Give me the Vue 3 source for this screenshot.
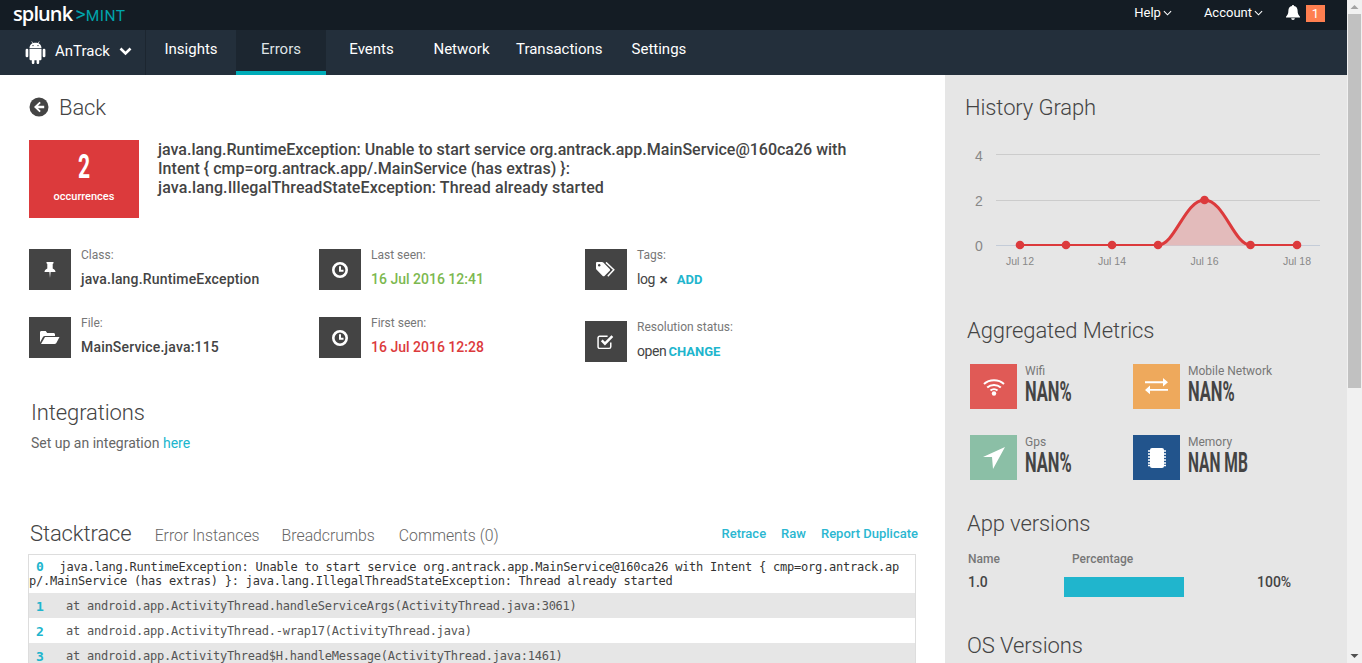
<script setup>
const meta = [
  [
    { icon: 'pin', label: 'Class:', value: 'java.lang.RuntimeException' },
    { icon: 'folder', label: 'File:', value: 'MainService.java:115' }
  ],
  [
    { icon: 'clock', label: 'Last seen:', value: '16 Jul 2016 12:41', cls: 'green' },
    { icon: 'clock', label: 'First seen:', value: '16 Jul 2016 12:28', cls: 'red' }
  ]
]
const frames = [
  'at android.app.ActivityThread.handleServiceArgs(ActivityThread.java:3061)',
  'at android.app.ActivityThread.-wrap17(ActivityThread.java)',
  'at android.app.ActivityThread$H.handleMessage(ActivityThread.java:1461)'
]
const pts = [1020, 1066, 1112, 1158, 1204.5, 1250.5, 1297]
</script>

<template>
  <div class="page">
    <div class="content">
      <header class="topbar">
        <div class="brand"><span class="splunk">splunk</span><span class="gt">&gt;</span><span class="mint">MINT</span></div>
        <div class="topright">
          <span class="tlink">Help <svg width="9" height="6" viewBox="0 0 10 6"><path d="M1 1l4 4 4-4" fill="none" stroke="#fff" stroke-width="1.2"/></svg></span>
          <span class="tlink acc">Account <svg width="9" height="6" viewBox="0 0 10 6"><path d="M1 1l4 4 4-4" fill="none" stroke="#fff" stroke-width="1.2"/></svg></span>
          <svg class="bell" width="14" height="15" viewBox="0 0 14 15"><path d="M7 0c.6 0 1 .4 1 1 2.4.4 3.6 2.300 3.600 4.500 0 3.500 1 4.700 2.400 6.200v.8H0v-.8c1.400-1.500 2.400-2.700 2.400-6.200C2.400 3.300 3.600 1.400 6 1c0-.6.400-1 1-1zM5.200 13.300h3.600C8.800 14.300 8 15 7 15s-1.800-.7-1.800-1.700z" fill="#fff"/></svg>
          <span class="badge">1</span>
        </div>
      </header>
      <nav class="navbar">
        <div class="app">
          <svg width="21" height="23" viewBox="0 0 21 23"><g fill="#fff"><path d="M4.500 7.800h12v10.200c0 .8-.6 1.300-1.300 1.300h-1v2.400c0 .7-.6 1.300-1.300 1.300s-1.300-.6-1.300-1.300v-2.400H9.400v2.400c0 .7-.6 1.300-1.300 1.300s-1.300-.6-1.300-1.300v-2.400h-1c-.7 0-1.300-.5-1.300-1.300z"/><rect x="0.600" y="7.800" width="2.700" height="8.500" rx="1.300"/><rect x="17.700" y="7.800" width="2.700" height="8.500" rx="1.300"/><path d="M4.500 7c.1-2.200 1.300-3.800 3-4.700L6.400.6l.5-.3 1.100 1.800c1.600-.6 3.400-.6 5 0L14.100.3l.5.3-1.100 1.700c1.700.9 2.900 2.500 3 4.700z"/></g><circle cx="8" cy="4.600" r=".7" fill="#232f3b"/><circle cx="13" cy="4.600" r=".7" fill="#232f3b"/></svg>
          <span class="appname">AnTrack</span>
          <svg class="appchev" width="13" height="9" viewBox="0 0 13 9"><path d="M1.500 1.500l5 5 5-5" fill="none" stroke="#fff" stroke-width="2.600"/></svg>
        </div>
        <a class="tab t1">Insights</a>
        <a class="tab active">Errors</a>
        <a class="tab t3">Events</a>
        <a class="tab t4">Network</a>
        <a class="tab t5">Transactions</a>
        <a class="tab t6">Settings</a>
      </nav>
      <div class="columns">
        <main class="main">
          <div class="back">
            <svg width="20" height="20" viewBox="0 0 20 20"><circle cx="10" cy="10" r="9.500" fill="#444"/><path d="M10.500 4.800l1.300 1.300-2.800 2.700h6.200v2.400H9l2.800 2.700-1.300 1.300L5 10z" fill="#fff"/></svg>
            <span>Back</span>
          </div>
          <div class="summary">
            <div class="occ"><div class="num">2</div><div class="occl">occurrences</div></div>
            <div class="title">java.lang.RuntimeException: Unable to start service org.antrack.app.MainService@160ca26 with<br><span class="l2">Intent { cmp=org.antrack.app/.MainService (has extras) }:</span><br><span class="l3">java.lang.IllegalThreadStateException: Thread already started</span></div>
          </div>
          <div class="meta">
            <div v-for="(col, ci) in meta" :key="ci" class="mcol" :class="'c' + ci">
              <div v-for="m in col" :key="m.label" class="mitem">
                <div class="mbox">
                  <svg v-if="m.icon === 'pin'" width="12" height="16" viewBox="0 0 12 16"><path d="M2.500 0h7v1.300L8.700 2v4.500c1.800.8 2.800 2.100 2.800 3.500H6.600L6 16l-.6-6H.5c0-1.400 1-2.700 2.800-3.500V2l-.8-.7z" fill="#fff"/></svg>
                  <svg v-if="m.icon === 'folder'" width="20" height="15" viewBox="0 0 20 15"><path d="M0 2.500C0 1.500.6 1 1.500 1h4.200l1.500 2h6.300c.9 0 1.500.6 1.500 1.500V6H5c-1 0-1.700.4-2.200 1.200L0 12.500z" fill="#fff"/><path d="M5 7h14.500l-3.300 6.200c-.4.6-1 .8-1.700.8H1z" fill="#fff"/></svg>
                  <svg v-if="m.icon === 'clock'" width="16" height="16" viewBox="0 0 16 16"><circle cx="8" cy="8" r="6.700" fill="none" stroke="#fff" stroke-width="2.600"/><path d="M8 4.300v4.400h3.500" fill="none" stroke="#fff" stroke-width="2"/></svg>
                </div>
                <div class="mtext"><div class="mlabel">{{ m.label }}</div><div class="mval" :class="m.cls">{{ m.value }}</div></div>
              </div>
            </div>
            <div class="mcol c2">
              <div class="mitem">
                <div class="mbox"><svg width="20" height="16" viewBox="0 0 20 16"><path d="M0 1.200C0 .5.500 0 1.200 0H6c.5 0 1 .2 1.300.5l6.400 6.400c.5.500.5 1.300 0 1.800l-5.200 5.200c-.5.5-1.300.5-1.800 0L.4 7.500C.1 7.200 0 6.800 0 6.300z" fill="#fff"/><circle cx="3.200" cy="3.200" r="1.200" fill="#444"/><path d="M10 .4l7.800 7.400-6 6.500" fill="none" stroke="#fff" stroke-width="1.500"/></svg></div>
                <div class="mtext"><div class="mlabel">Tags:</div><div class="mval plain">log <span class="x">✕</span><a class="add">ADD</a></div></div>
              </div>
              <div class="mitem res">
                <div class="mbox"><svg width="18" height="17" viewBox="0 0 17 16"><path d="M13 9v4a1.500 1.500 0 0 1-1.500 1.500H2.500A1.500 1.500 0 0 1 1 13V4.500A1.500 1.500 0 0 1 2.500 3H10" fill="none" stroke="#fff" stroke-width="1.400"/><path d="M4.500 7l3 3 7-7" fill="none" stroke="#fff" stroke-width="2.400"/></svg></div>
                <div class="mtext"><div class="mlabel">Resolution status:</div><div class="mval plain">open <a class="chg">CHANGE</a></div></div>
              </div>
            </div>
          </div>
          <h2 class="integ">Integrations</h2>
          <p class="integp">Set up an integration <a>here</a></p>
          <div class="tabs">
            <h2>Stacktrace</h2>
            <span class="st s1">Error Instances</span>
            <span class="st s2">Breadcrumbs</span>
            <span class="st s3">Comments (0)</span>
            <div class="links"><a>Retrace</a><a>Raw</a><a>Report Duplicate</a></div>
          </div>
          <div class="trace">
            <div class="row0"><b>0</b>java.lang.RuntimeException: Unable to start service org.antrack.app.MainService@160ca26 with Intent { cmp=org.antrack.app/.MainService (has extras) }: java.lang.IllegalThreadStateException: Thread already started</div>
            <div v-for="(f, i) in frames" :key="i" class="frow" :class="{ odd: i % 2 === 0 }"><b>{{ i + 1 }}</b><span>{{ f }}</span></div>
          </div>
        </main>
        <aside class="side">
          <h2 class="hg">History Graph</h2>
          <svg class="chart" width="402" height="160" viewBox="945 130 402 160">
            <g stroke="#ccc" stroke-width="1"><line x1="996" x2="1320" y1="154.500" y2="154.500"/><line x1="996" x2="1320" y1="200.500" y2="200.500"/><line x1="996" x2="1320" y1="245.500" y2="245.500" stroke="#c4ccd8"/></g>
            <g class="ya"><text x="975" y="161">4</text><text x="975" y="206">2</text><text x="975" y="251">0</text></g>
            <path d="M1158 245.500C1175 245.500 1185 200 1204.500 200C1224 200 1234 245.500 1250.500 245.500Z" fill="#e3bbbb"/>
            <path d="M1158 245C1175 245 1185 200 1204.500 200C1224 200 1234 245 1250.500 245" fill="none" stroke="#dc3a3c" stroke-width="3"/>
            <path d="M1020 245H1158M1250.500 245H1297" fill="none" stroke="#dc3a3c" stroke-width="2"/>
            <circle v-for="(x, i) in pts" :key="i" :cx="x" :cy="i === 4 ? 200 : 245" r="4.300" fill="#dc3a3c"/>
            <g class="xa"><text x="1020" y="265">Jul 12</text><text x="1112" y="265">Jul 14</text><text x="1204.500" y="265">Jul 16</text><text x="1297" y="265">Jul 18</text></g>
          </svg>
          <h2 class="am">Aggregated Metrics</h2>
          <div class="metrics">
            <div class="metric">
              <div class="mi redbg"><svg width="22" height="18" viewBox="0 0 22 18"><g fill="none" stroke="#fff" stroke-width="2"><path d="M1 6c5.500-5 14.500-5 20 0"/><path d="M4.200 9.500c3.800-3.500 9.800-3.500 13.600 0"/><path d="M7.500 12.500c2-1.800 5-1.800 7 0"/></g><circle cx="11" cy="15.500" r="2.200" fill="#fff"/></svg></div>
              <div><div class="ml">Wifi</div><div class="mv">NAN%</div></div>
            </div>
            <div class="metric">
              <div class="mi orange"><svg width="23" height="17" viewBox="0 0 23 17"><path d="M0 3.500h18V0l5 4.500-5 4.500V5.500H0zM23 11.500H5V8l-5 4.500L5 17v-3.500h18z" fill="#fff" transform="scale(1 .95)"/></svg></div>
              <div><div class="ml">Mobile Network</div><div class="mv">NAN%</div></div>
            </div>
            <div class="metric">
              <div class="mi teal"><svg width="22" height="22" viewBox="0 0 22 22"><path d="M22 0L10 22l-1-12L0 10z" fill="#fff"/></svg></div>
              <div><div class="ml">Gps</div><div class="mv">NAN%</div></div>
            </div>
            <div class="metric">
              <div class="mi blue"><svg width="18" height="20" viewBox="0 0 18 20"><rect x="2" y="0" width="14" height="20" rx="2" fill="#fff"/><g stroke="#fff" stroke-width="1.300"><path d="M0 3h18M0 6h18M0 9h18M0 12h18M0 15h18M0 17.500h18"/></g></svg></div>
              <div><div class="ml">Memory</div><div class="mv mb">NAN MB</div></div>
            </div>
          </div>
          <h2 class="av">App versions</h2>
          <div class="vhead"><span>Name</span><span>Percentage</span></div>
          <div class="vrow"><span class="vn">1.0</span><div class="bar"></div><span class="vp">100%</span></div>
          <h2 class="os">OS Versions</h2>
        </aside>
      </div>
    </div>
    <div class="scroll">
      <svg width="15" height="14" viewBox="0 0 15 14"><path d="M3.500 9L7.500 5l4 4z" fill="#a3a3a3"/></svg>
      <div class="thumb"></div>
      <div class="spacer"></div>
      <svg width="15" height="14" viewBox="0 0 15 14"><path d="M3.500 5l4 4 4-4z" fill="#505050"/></svg>
    </div>
  </div>
</template>

<style>
html, body { margin: 0; height: 100%; overflow: hidden; }
</style>

<style scoped>
.page { display: flex; height: 663px; width: 1362px; overflow: hidden; font-family: Roboto, sans-serif; color: #444; background: #fff; }
.content { width: 1347px; display: flex; flex-direction: column; overflow: hidden; }
.topbar { height: 30px; flex: none; background: #141c24; display: flex; justify-content: space-between; color: #fff; }
.brand { margin-left: 13px; display: flex; align-items: baseline; line-height: 28px; }
.splunk { font: 600 20px/28px "Open Sans", sans-serif; letter-spacing: -0.9px; color: #fff; }
.gt { font: 400 20px/28px Roboto, sans-serif; color: #00a4ac; margin-left: 3px; }
.mint { font: 400 15.500px/28px Roboto, sans-serif; letter-spacing: .5px; color: #00a4ac; margin-left: 0; }
.topright { display: flex; align-items: center; font-size: 13px; padding-right: 22px; height: 27px; }
.tlink { display: inline-flex; align-items: center; gap: 2px; margin-top: -2px; }
.acc { margin-left: 32px; }
.bell { margin-left: 23px; margin-top: -2px; }
.badge { margin-left: 6px; width: 19px; height: 17px; background: #ff7f50; font-size: 13px; line-height: 17px; text-align: center; }
.navbar { height: 45px; flex: none; background: #232f3b; display: flex; color: #fff; font-size: 15px; }
.app { width: 146px; border-right: 1px solid #1c2630; display: flex; align-items: center; padding-left: 25px; box-sizing: border-box; flex: none; }
.appname { margin-left: 9px; margin-right: 9px; font-size: 15px; margin-top: -4px; }
.appchev { margin-top: -3px; }
.tab { line-height: 38px; flex: none; text-align: center; box-sizing: border-box; height: 45px; }
.t1 { width: 90px; }
.active { width: 90px; background: #1c2630; border-bottom: 4px solid #00acb8; color: #dfe3e6; }
.t3 { width: 91px; }
.t4 { width: 89px; }
.t5 { margin-left: 10px; }
.t6 { margin-left: 29px; }
.columns { flex: 1; display: flex; min-height: 0; }
.main { width: 945px; flex: none; box-sizing: border-box; padding: 0 30px 0 29px; overflow: hidden; }
.back { display: flex; align-items: center; height: 26px; margin-top: 19px; font-weight: 300; font-size: 22px; gap: 10px; color: #444; letter-spacing: -.1px; }
.summary { display: flex; margin-top: 20px; }
.occ { width: 110px; height: 78px; background: #dc3a3c; color: #fff; text-align: center; flex: none; }
.num { font: 700 34px/40px Roboto, sans-serif; margin-top: 6px; transform: scaleX(.62); }
.occl { font-size: 11px; font-weight: 500; margin-top: 4px; line-height: 14px; }
.title { margin-left: 19px; font-size: 16px; font-weight: 500; line-height: 19px; white-space: nowrap; color: #444; }
.l2 { letter-spacing: .04px; }
.l3 { letter-spacing: .11px; }
.meta { display: flex; margin-top: 31px; }
.mcol { display: flex; flex-direction: column; gap: 27px; }
.c0 { width: 290px; }
.c1 { width: 266px; }
.mitem { display: flex; height: 41px; }
.res { margin-top: 4px; }
.mbox { width: 42px; height: 41px; background: #444; display: flex; align-items: center; justify-content: center; flex: none; }
.mtext { margin-left: 10px; margin-top: -1px; }
.mlabel { font-size: 12px; color: #777; line-height: 14px; }
.mval { font-size: 14px; font-weight: 500; line-height: 16px; margin-top: 9px; white-space: nowrap; letter-spacing: .18px; }
.green { color: #7cb84f; letter-spacing: 0; }
.red { color: #dc3a3c; letter-spacing: 0; }
.plain { font-weight: 400; font-size: 14px; letter-spacing: -.4px; }
.x { font-size: 11px; font-weight: 700; margin-left: 1px; }
.add { color: #20b5cd; font-weight: 700; font-size: 13px; margin-left: 9px; letter-spacing: 0; }
.chg { color: #20b5cd; font-weight: 700; font-size: 13px; letter-spacing: 0; margin-left: -1px; }
.integ { font-size: 22px; font-weight: 300; margin: 38px 0 0 2px; line-height: 26px; color: #444; letter-spacing: -.1px; }
.integp { margin: 7px 0 0 2px; font-size: 14px; line-height: 20px; color: #666; font-weight: 400; }
.integp a { color: #20b5cd; }
h2 { font-weight: 300; font-size: 22px; margin: 0; }
.tabs { display: flex; align-items: baseline; margin-top: 68px; height: 33px; margin-left: 1px; margin-right: -3px; }
.tabs h2 { line-height: 26px; color: #444; letter-spacing: -.1px; }
.st { font-size: 15.800px; font-weight: 300; color: #666; }
.s1 { margin-left: 23px; }
.s2 { margin-left: 22px; }
.s3 { margin-left: 24px; }
.links { margin-left: auto; display: flex; gap: 15px; font-size: 13px; font-weight: 500; color: #2bb7d1; align-self: flex-start; line-height: 26px; }
.trace { width: 888px; box-sizing: border-box; border: 1px solid #ddd; margin-left: -1px; font: 12px/14px "DejaVu Sans Mono", monospace; color: #555; letter-spacing: -.23px; }
.row0 { word-break: break-all; padding: 5px 10px 4px 0; color: #333; height: 29px; }
.row0 b { color: #20b5cd; margin-left: 7px; margin-right: 16px; font-size: 13px; }
.frow { height: 25px; line-height: 27px; display: flex; white-space: nowrap; }
.frow b { color: #20b5cd; margin-left: 7px; width: 30px; flex: none; font-size: 13px; }
.odd { background: #e6e6e6; }
.side { width: 402px; flex: none; background: #e6e6e6; overflow: hidden; position: relative; }
.side h2 { color: #444; line-height: 26px; letter-spacing: -.1px; }
.hg { margin: 20px 0 0 20px; }
.chart { display: block; margin-top: 9px; }
.ya text { font: 14px "Liberation Sans", sans-serif; fill: #888; }
.xa text { font: 10.500px "Liberation Sans", sans-serif; fill: #888; text-anchor: middle; }
.am { margin: 28px 0 0 22px; }
.metrics { display: grid; grid-template-columns: 163px 1fr; row-gap: 26px; margin: 20px 0 0 25px; }
.metric { display: flex; height: 45px; gap: 8px; }
.mi { width: 47px; height: 45px; display: flex; align-items: center; justify-content: center; flex: none; }
.redbg { background: #e05a56; }
.orange { background: #eea95c; }
.teal { background: #8bbfa6; }
.blue { background: #22548c; }
.ml { font-size: 12px; color: #777; line-height: 14px; font-weight: 400; }
.mv { font: 700 27px/26px Roboto, sans-serif; color: #444; transform: scaleX(.61); transform-origin: left; white-space: nowrap; margin-top: 1px; }
.mb { transform: scaleX(.575); }
.av { margin: 31px 0 0 22px; }
.vhead { margin: 15px 0 0 23px; display: flex; font-size: 12px; font-weight: 500; color: #777; line-height: 14px; }
.vhead span:first-child { width: 104px; }
.vrow { display: flex; align-items: center; margin: 11px 0 0 23px; height: 20px; font-size: 14px; font-weight: 500; }
.vn { width: 96px; margin-top: -10px; }
.bar { width: 120px; height: 20px; background: #20b5cd; }
.vp { margin-left: 73px; margin-top: -10px; }
.os { margin: 36px 0 0 22px; }
.scroll { width: 15px; flex: none; background: #f1f1f1; display: flex; flex-direction: column; }
.thumb { height: 374px; margin: 0 1px; background: #c1c1c1; }
.spacer { flex: 1; }
</style>
